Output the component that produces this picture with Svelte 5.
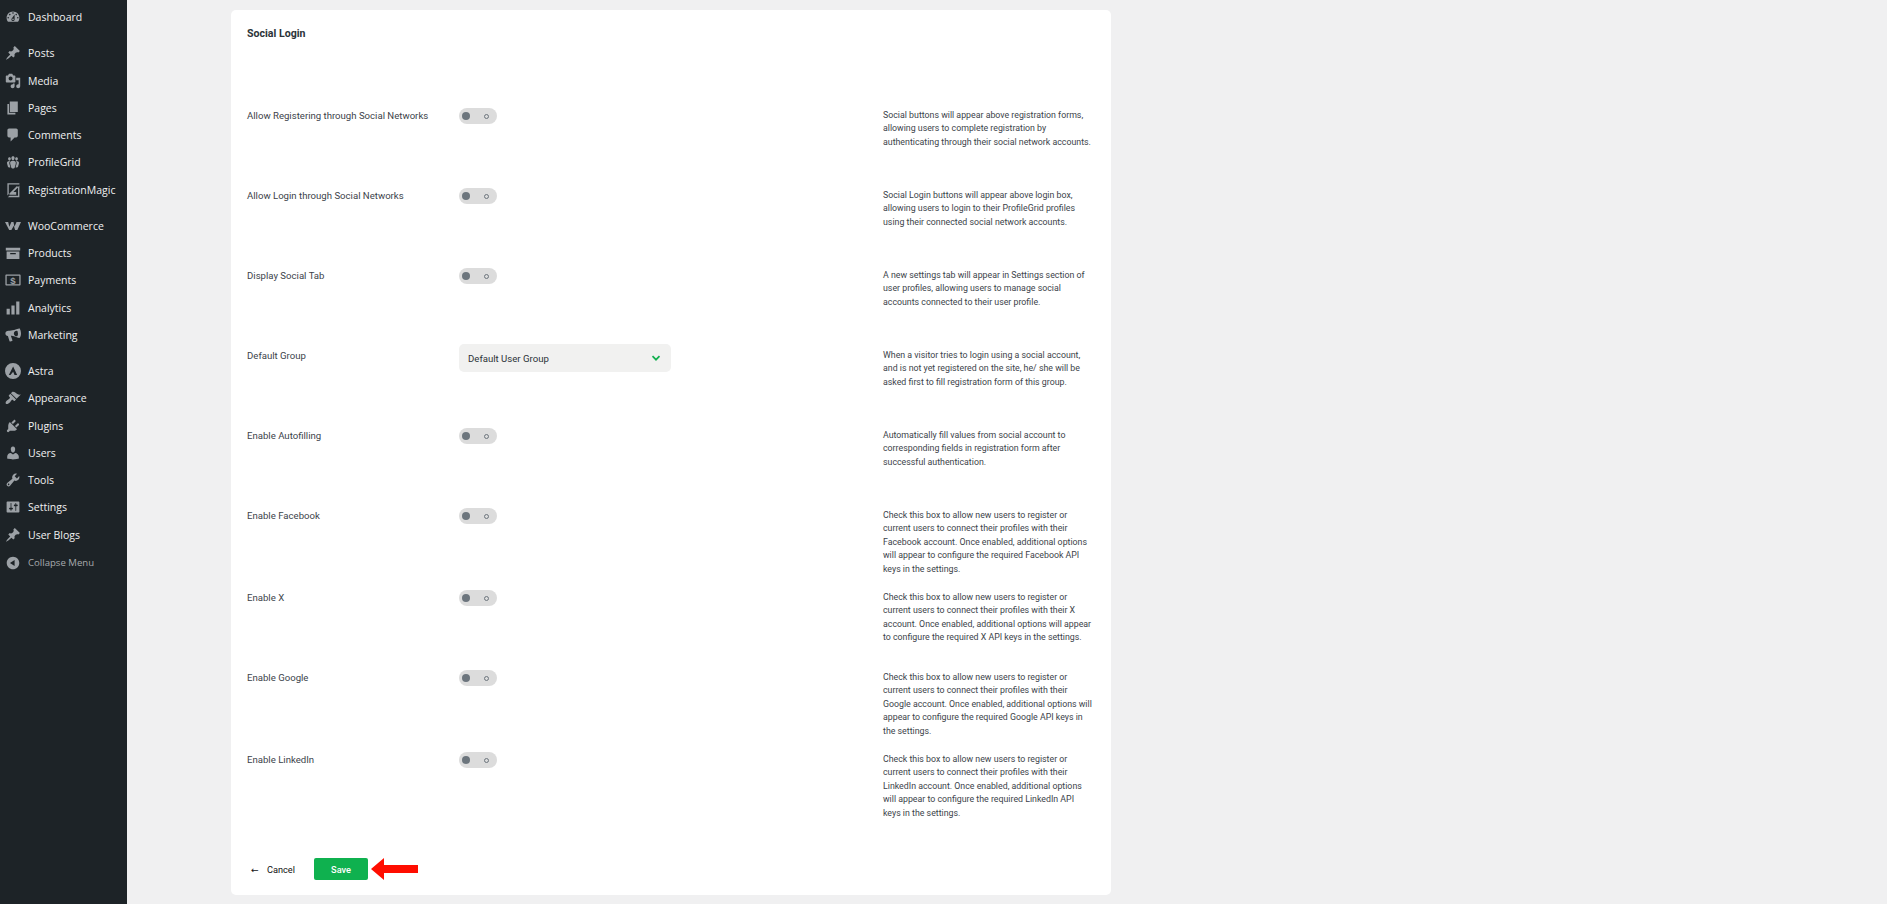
<script>
  const pin = 'M10.44 3.02l1.82-1.82 6.36 6.35-1.83 1.82c-1.05-.68-2.48-.57-3.41.36l-.75.75c-.92.93-1.04 2.35-.35 3.41l-1.83 1.82-2.41-2.41-2.8 2.79c-.42.42-3.38 2.71-3.8 2.29s1.86-3.39 2.28-3.81l2.79-2.79L4.1 9.36l1.83-1.82c1.05.69 2.48.57 3.4-.36l.75-.75c.93-.92 1.05-2.35.36-3.41z';

  const menu = [
    { label: 'Dashboard', d: 'M3.76 16h12.48c1.1-1.37 1.76-3.11 1.76-5 0-4.42-3.58-8-8-8s-8 3.58-8 8c0 1.89.66 3.63 1.76 5zM10 4c.55 0 1 .45 1 1s-.45 1-1 1-1-.45-1-1 .45-1 1-1zM6 6c.55 0 1 .45 1 1s-.45 1-1 1-1-.45-1-1 .45-1 1-1zm8 0c.55 0 1 .45 1 1s-.45 1-1 1-1-.45-1-1 .45-1 1-1zm-5.37 5.55L12 7v6c0 1.1-.9 2-2 2s-2-.9-2-2c0-.57.24-1.08.63-1.45zM4 10c.55 0 1 .45 1 1s-.45 1-1 1-1-.45-1-1 .45-1 1-1zm12 0c.55 0 1 .45 1 1s-.45 1-1 1-1-.45-1-1 .45-1 1-1zm-5 3c0-.55-.45-1-1-1s-1 .45-1 1 .45 1 1 1 1-.45 1-1z' },
    { label: 'Posts', d: pin, sep: true },
    { label: 'Media', d: 'M13 11V4c0-.55-.45-1-1-1h-1.67L9 1H5L3.67 3H2c-.55 0-1 .45-1 1v7c0 .55.45 1 1 1h10c.55 0 1-.45 1-1zM7 4.5c1.38 0 2.5 1.12 2.5 2.5S8.38 9.5 7 9.5 4.5 8.38 4.5 7 5.62 4.5 7 4.5zM14 6h5v10.5c0 1.38-1.12 2.5-2.5 2.5S14 17.88 14 16.5s1.12-2.5 2.5-2.5c.17 0 .34.02.5.05V9h-3V6zm-4 8.05V13h2v3.5c0 1.38-1.12 2.5-2.5 2.5S7 17.88 7 16.5 8.12 14 9.5 14c.17 0 .34.02.5.05z' },
    { label: 'Pages', d: 'M6 15V2h10v13H6zm-1 1h8v2H3V5h2v11z' },
    { label: 'Comments', d: 'M5 2h9c1.1 0 2 .9 2 2v7c0 1.1-.9 2-2 2h-2l-5 5v-5H5c-1.1 0-2-.9-2-2V4c0-1.1.9-2 2-2z' },
    { label: 'ProfileGrid', d: 'M8.03 4.46c-.29 1.28.55 3.46 1.97 3.46 1.41 0 2.25-2.18 1.96-3.46-.22-.98-1.08-1.63-1.96-1.63-.89 0-1.74.65-1.97 1.63zm-4.13.9c-.25 1.08.47 2.93 1.67 2.93s1.92-1.85 1.67-2.93c-.19-.83-.92-1.39-1.67-1.39s-1.48.56-1.67 1.39zm8.86 0c-.25 1.08.47 2.93 1.66 2.93 1.2 0 1.92-1.85 1.67-2.93-.19-.83-.92-1.39-1.67-1.39-.74 0-1.47.56-1.66 1.39zm-.59 11.43l1.25-4.3C14.2 10 12.71 8.47 10 8.47c-2.72 0-4.21 1.53-3.44 4.02l1.26 4.3C8.05 17.51 9 18 10 18c.98 0 1.94-.49 2.17-1.21zm-6.1-7.63c-.49.67-.96 1.83-.42 3.59l1.12 3.79c-.34.2-.77.31-1.2.31-.85 0-1.65-.41-1.85-1.03l-1.07-3.65c-.65-2.11.61-3.4 2.92-3.4.27 0 .54.02.79.06-.1.1-.2.22-.29.33zm8.35-.39c2.31 0 3.58 1.29 2.92 3.4l-1.07 3.65c-.2.62-1 1.03-1.85 1.03-.43 0-.86-.11-1.2-.31l1.11-3.77c.55-1.78.08-2.94-.42-3.61-.08-.11-.18-.23-.28-.33.25-.04.51-.06.79-.06z' },
    { label: 'RegistrationMagic', d: 'M3 1.5h15v1.6H4.7V15L3 17zM18 4.5V19H3.5l2-1.7h10.8V6.3zM5.5 14.5 15 5l1.5 1.5-6 6H14V16H5.5z' },
    { label: 'WooCommerce', d: 'M0 5h4l1.4 6L8 5h2.6l1.2 6L14.4 5H20l-4.6 10h-2.8L11 9.6 8 15H5.2z', sep: true },
    { label: 'Products', d: 'M1 3.5h18V7H1zM2 8h16v9.5H2zM6.5 10v1.6h7V10z' },
    { label: 'Payments', d: 'M1.5 3h17c.6 0 1 .4 1 1v12c0 .6-.4 1-1 1h-17c-.6 0-1-.4-1-1V4c0-.6.4-1 1-1zm.6 1.6v10.8h15.8V4.6z', dollar: true },
    { label: 'Analytics', d: 'M2 11h4v7H2zM8 7h4v11H8zM14 2h4v16h-4z' },
    { label: 'Marketing', d: 'M18 1.5c1.2 1.6 2 4 2 6.5s-.8 4.6-2 5.8c-1.6-.2-6-2.4-9.5-3l-1.2.2 2 5.6c.1.4-.1.8-.5.9l-2.2.7c-.4.1-.8-.1-.9-.5L3.6 11.3C1.8 11 .5 9.6.5 8s1.5-3.2 4-3.2c3.5 0 10.5-2 13.5-3.3zM15.6 5a3.4 3.4 0 100 6.4 9 9 0 000-6.4z' },
    { label: 'Astra', d: 'M10 0a10 10 0 100 20 10 10 0 000-20zM10.2 4.4l5 10.6h-3.3l-1.7-4-3.4 4H4.8z', sep: true },
    { label: 'Appearance', d: 'M14.48 11.06L7.41 3.99l1.5-1.5c.5-.56 2.3-.47 3.51.32 1.21.8 1.43 1.28 2.91 2.1 1.18.64 2.45 1.26 4.45.85zm-.71.71L6.7 4.7 4.93 6.47c-.39.39-.39 1.02 0 1.41l1.06 1.06c.39.39.39 1.03 0 1.42-.6.6-1.43 1.11-2.21 1.69-.35.26-.7.53-1.01.84C1.43 13.71.2 15.5 1.05 17.3c1.8.85 3.59-.38 4.9-1.72.31-.31.58-.66.84-1.01.58-.78 1.09-1.61 1.69-2.21.39-.39 1.03-.39 1.42 0l1.06 1.06c.39.39 1.02.39 1.41 0z' },
    { label: 'Plugins', d: 'M13.11 4.36L9.87 7.6 8 5.73l3.24-3.24c.35-.34 1.05-.2 1.56.32.52.51.66 1.21.31 1.55zm-8 1.77l.91-1.12 9.01 9.01-1.19.84c-.71.71-2.63 1.16-3.82 1.16H6.14L4.9 17.26c-.59.59-1.54.59-2.12 0-.59-.58-.59-1.53 0-2.12l1.24-1.24v-3.88c0-1.13.4-3.19 1.09-3.89zm7.26 3.97l3.24-3.24c.34-.35 1.04-.21 1.55.31.52.51.66 1.21.31 1.55l-3.24 3.25z' },
    { label: 'Users', d: 'M10 9.25c-2.27 0-2.73-3.44-2.73-3.44C7 4.02 7.82 2 9.97 2c2.16 0 2.98 2.02 2.71 3.81 0 0-.41 3.44-2.68 3.44zm0 2.57L12.72 10c2.39 0 4.52 2.33 4.52 4.53v2.49s-3.65 1.13-7.24 1.13c-3.65 0-7.24-1.13-7.24-1.13v-2.49c0-2.25 1.94-4.48 4.47-4.48z' },
    { label: 'Tools', d: 'M16.68 9.77c-1.34 1.34-3.3 1.67-4.95.99l-5.41 6.52c-.99.99-2.59.99-3.58 0s-.99-2.59 0-3.57l6.52-5.42c-.68-1.65-.35-3.61.99-4.95 1.28-1.28 3.12-1.62 4.72-1.06l-2.89 2.89 2.82 2.82 2.86-2.87c.53 1.58.18 3.39-1.08 4.65zM3.81 16.21c.4.39 1.04.39 1.43 0 .4-.4.4-1.04 0-1.43-.39-.4-1.03-.4-1.43 0-.39.39-.39 1.03 0 1.43z' },
    { label: 'Settings', d: 'M18 16V4c0-.55-.45-1-1-1H3c-.55 0-1 .45-1 1v12c0 .55.45 1 1 1h14c.55 0 1-.45 1-1zM8 11h1c.55 0 1 .45 1 1s-.45 1-1 1H8v1.5c0 .28-.22.5-.5.5s-.5-.22-.5-.5V13H6c-.55 0-1-.45-1-1s.45-1 1-1h1V5.5c0-.28.22-.5.5-.5s.5.22.5.5V11zm5-2h-1c-.55 0-1-.45-1-1s.45-1 1-1h1V5.5c0-.28.22-.5.5-.5s.5.22.5.5V7h1c.55 0 1 .45 1 1s-.45 1-1 1h-1v5.5c0 .28-.22.5-.5.5s-.5-.22-.5-.5V9z' },
    { label: 'User Blogs', d: pin },
    { label: 'Collapse Menu', d: 'M10 2.16c4.33 0 7.84 3.51 7.84 7.84s-3.51 7.84-7.84 7.84S2.16 14.33 2.16 10 5.71 2.16 10 2.16zm2 11.72V6.12L6.18 9.97z', muted: true }
  ];

  const rows = [
    { label: 'Allow Registering through Social Networks', lines: ['Social buttons will appear above registration forms,', 'allowing users to complete registration by', 'authenticating through their social network accounts.'] },
    { label: 'Allow Login through Social Networks', lines: ['Social Login buttons will appear above login box,', 'allowing users to login to their ProfileGrid profiles', 'using their connected social network accounts.'] },
    { label: 'Display Social Tab', lines: ['A new settings tab will appear in Settings section of', 'user profiles, allowing users to manage social', 'accounts connected to their user profile.'] },
    { label: 'Default Group', select: true, lines: ['When a visitor tries to login using a social account,', 'and is not yet registered on the site, he/ she will be', 'asked first to fill registration form of this group.'] },
    { label: 'Enable Autofilling', lines: ['Automatically fill values from social account to', 'corresponding fields in registration form after', 'successful authentication.'] },
    { label: 'Enable Facebook', lines: ['Check this box to allow new users to register or', 'current users to connect their profiles with their', 'Facebook account. Once enabled, additional options', 'will appear to configure the required Facebook API', 'keys in the settings.'] },
    { label: 'Enable X', lines: ['Check this box to allow new users to register or', 'current users to connect their profiles with their X', 'account. Once enabled, additional options will appear', 'to configure the required X API keys in the settings.'] },
    { label: 'Enable Google', lines: ['Check this box to allow new users to register or', 'current users to connect their profiles with their', 'Google account. Once enabled, additional options will', 'appear to configure the required Google API keys in', 'the settings.'] },
    { label: 'Enable LinkedIn', lines: ['Check this box to allow new users to register or', 'current users to connect their profiles with their', 'LinkedIn account. Once enabled, additional options', 'will appear to configure the required LinkedIn API', 'keys in the settings.'] }
  ];
</script>

<div class="shell">
  <nav class="sidebar">
    {#each menu as item}
      <div class="menu-item" class:sep={item.sep} class:muted={item.muted}>
        <svg viewBox="0 0 20 20" fill="currentColor">
          <path d={item.d} fill-rule="evenodd" />
          {#if item.dollar}
            <text x="10" y="14.5" text-anchor="middle" font-size="12" font-weight="700" font-family="Liberation Sans, sans-serif">$</text>
          {/if}
        </svg>
        <span>{item.label}</span>
      </div>
    {/each}
  </nav>

  <main class="content">
    <section class="card">
      <h2>Social Login</h2>
      <div class="rows">
        {#each rows as row}
          <div class="row">
            <div class="label">{row.label}</div>
            <div class="control">
              {#if row.select}
                <div class="select">
                  <span>Default User Group</span>
                  <svg viewBox="0 0 12 12" fill="none" stroke="#12b04f" stroke-width="1.7"><path d="M2.5 4.2 6 7.7l3.5-3.5" /></svg>
                </div>
              {:else}
                <div class="toggle"><i class="knob"></i><i class="ring"></i></div>
              {/if}
            </div>
            <div class="desc">
              {#each row.lines as line}<div>{line}</div>{/each}
            </div>
          </div>
        {/each}
      </div>
      <div class="actions">
        <span class="cancel"><span class="back">←</span>Cancel</span>
        <button class="save">Save</button>
        <svg class="arrow" viewBox="0 0 47 22" fill="#ff0d00"><path d="M0 11 13 0v7h34v8H13v7z" /></svg>
      </div>
    </section>
  </main>
</div>

<style>
  :global(body) {
    margin: 0;
    background: #f0f0f1;
  }

  .shell {
    display: flex;
    height: 904px;
    overflow: hidden;
    font-family: Roboto, sans-serif;
  }

  .sidebar {
    width: 127px;
    flex-shrink: 0;
    background: #1d2327;
    padding-top: 3.4px;
    box-sizing: border-box;
    font-family: "Open Sans", sans-serif;
  }

  .menu-item {
    display: flex;
    align-items: center;
    height: 27.25px;
    padding-left: 5px;
    color: #f0f0f1;
    font-size: 10.5px;
  }

  .menu-item.sep {
    margin-top: 9px;
  }

  .menu-item svg {
    width: 16px;
    height: 16px;
    margin-right: 7px;
    color: #9ca1a6;
    flex-shrink: 0;
  }

  .menu-item.muted {
    color: #a7aaad;
    font-size: 9.6px;
    margin-top: 1px;
  }

  .content {
    flex: 1;
    padding: 10px 0 0 104px;
  }

  .card {
    width: 880px;
    height: 885px;
    box-sizing: border-box;
    background: #fff;
    border-radius: 5px;
    padding: 0 16px;
    display: flex;
    flex-direction: column;
    color: #3c434a;
  }

  h2 {
    margin: 0;
    padding-top: 16px;
    height: 87px;
    box-sizing: border-box;
    font-size: 10.6px;
    font-weight: 700;
    line-height: 15px;
    color: #2c3338;
  }

  .row {
    display: grid;
    grid-template-columns: 212px 424px 1fr;
    min-height: 80px;
    font-size: 9.6px;
  }

  .label {
    line-height: 13.4px;
    padding-top: 12px;
  }

  .control {
    padding-top: 11px;
  }

  .toggle {
    position: relative;
    width: 38px;
    height: 16px;
    border-radius: 8px;
    background: #dcdcdc;
  }

  .knob {
    position: absolute;
    left: 3px;
    top: 4px;
    width: 8px;
    height: 8px;
    border-radius: 50%;
    background: #6c757d;
  }

  .ring {
    position: absolute;
    right: 8px;
    top: 5.5px;
    width: 5px;
    height: 5px;
    box-sizing: border-box;
    border: 1px solid #6c757d;
    border-radius: 50%;
  }

  .select {
    display: flex;
    align-items: center;
    justify-content: space-between;
    width: 212px;
    height: 28px;
    margin-top: -4px;
    padding: 0 9px;
    box-sizing: border-box;
    background: #f1f1f0;
    border-radius: 5px;
    color: #2c3338;
  }

  .select svg {
    width: 12px;
    height: 12px;
  }

  .desc {
    font-size: 8.8px;
    line-height: 13.4px;
    padding: 12px 0 3px;
    white-space: nowrap;
  }

  .actions {
    display: flex;
    align-items: center;
    margin-top: auto;
    margin-bottom: 15px;
    height: 22px;
    color: #111;
    font-size: 9.2px;
  }

  .cancel {
    display: inline-flex;
    align-items: center;
    width: 67px;
    padding-left: 4px;
    box-sizing: border-box;
  }

  .back {
    width: 16px;
    font-family: "DejaVu Sans", sans-serif;
  }

  .save {
    width: 54px;
    height: 22px;
    border: none;
    border-radius: 2px;
    background: #0fb14f;
    color: #fff;
    font: inherit;
    font-weight: 500;
  }

  .arrow {
    width: 47px;
    height: 22px;
    margin-left: 3px;
  }
</style>
